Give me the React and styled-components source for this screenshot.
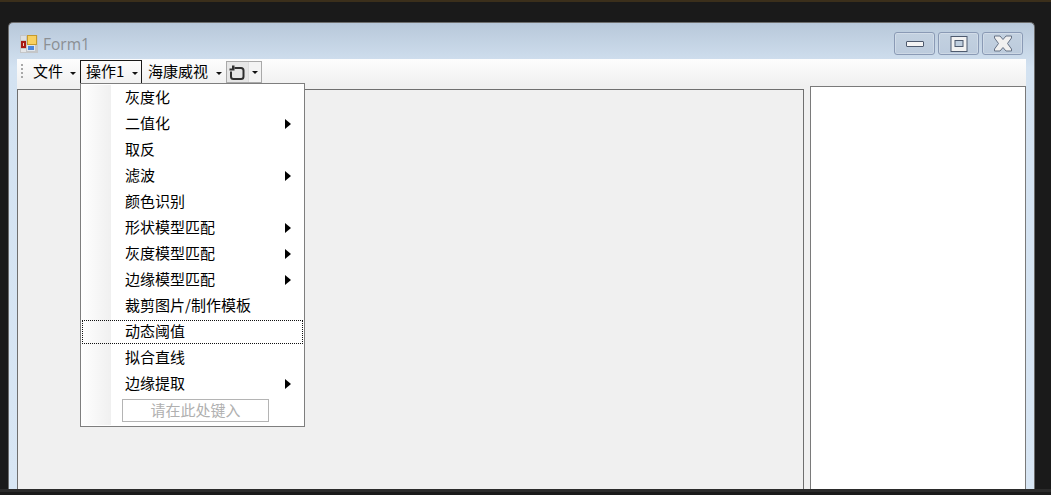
import React from 'react';
import styled, { createGlobalStyle } from 'styled-components';

const cjk = `'Noto Sans CJK SC', 'Liberation Sans', sans-serif`;

const GlobalStyle = createGlobalStyle`
  html, body {
    margin: 0;
    padding: 0;
    background: #1a1a1a;
    overflow: hidden;
  }
  * {
    box-sizing: border-box;
  }
`;

const Page = styled.div`
  width: 1051px;
  height: 495px;
  display: flex;
  flex-direction: column;
  background: #1a1a1a;
  overflow: hidden;
`;

const TopLine = styled.div`
  height: 2px;
  flex: none;
  background: #3b2f1b;
`;

const Desktop = styled.div`
  flex: 1;
  min-height: 0;
  padding: 20px 16px 0 8px;
  display: flex;
`;

const BottomBar = styled.div`
  height: 6px;
  flex: none;
  background: linear-gradient(to bottom, #2b2b2b 0, #2b2b2b 3px, #1a1a1a 3px);
`;

const Window = styled.div`
  flex: 1;
  display: flex;
  flex-direction: column;
  border: 1px solid #6d6d6d;
  border-bottom: none;
  border-radius: 5px 5px 0 0;
  padding: 0 8px 0 8px;
  background: linear-gradient(to bottom, #b8c8da 0, #d3e2f1 45px, #d8e6f4 100%);
`;

const TitleBar = styled.div`
  height: 36px;
  flex: none;
  display: flex;
  align-items: flex-start;
  padding: 9px 3px 0 3px;
`;

const AppIcon = styled.svg`
  width: 18px;
  height: 18px;
  margin-top: 3px;
  flex: none;
`;

const TitleText = styled.span`
  margin-left: 5px;
  margin-top: 2px;
  font: 15.5px/20px 'Open Sans', sans-serif;
  color: #8b8f94;
`;

const Caption = styled.div`
  margin-left: auto;
  display: flex;
  gap: 3px;
`;

const CaptionButton = styled.div`
  width: 41px;
  height: 23px;
  border: 1px solid #8a9ab5;
  border-radius: 3px;
  background: linear-gradient(to bottom, #c3d1e0, #bccbdd);
  box-shadow: inset 0 0 0 1px rgba(255, 255, 255, 0.25);
  display: flex;
  align-items: center;
  justify-content: center;
`;

const Toolbar = styled.div`
  height: 27px;
  flex: none;
  display: flex;
  align-items: flex-start;
  padding: 1px 0 0 4px;
  background: linear-gradient(to bottom, #fdfdfd, #f0f0f0);
  font: 15px/22px ${cjk};
  color: #000;
`;

const Grip = styled.div`
  width: 2px;
  height: 15px;
  margin: 4px 5px 0 0;
  flex: none;
  background: repeating-linear-gradient(to bottom, #a8a8a8 0, #a8a8a8 2px, transparent 2px, transparent 4px);
`;

const MenuButton = styled.div`
  position: relative;
  width: ${(p) => p.$width}px;
  height: 23px;
  flex: none;
  display: flex;
  align-items: center;
  padding: 0 0 2px ${(p) => p.$inset}px;
  border: 1px solid ${(p) => (p.$open ? '#1a1a1a' : 'transparent')};
  border-bottom: none;
  white-space: nowrap;
`;

const Caret = styled.span`
  position: absolute;
  right: ${(p) => p.$right}px;
  top: 11px;
  width: 0;
  height: 0;
  border-left: 3px solid transparent;
  border-right: 3px solid transparent;
  border-top: 3px solid #111;
`;

const SplitButton = styled.div`
  width: 36px;
  height: 22px;
  flex: none;
  margin-top: 1px;
  display: flex;
  border: 1px solid #a9a9a9;
`;

const SplitIcon = styled.div`
  width: 21px;
  display: flex;
  align-items: center;
  justify-content: center;
  background: #e6e6e6;
`;

const SplitArrow = styled.div`
  flex: 1;
  display: flex;
  align-items: center;
  justify-content: center;
  background: #f3f3f3;
  border-left: 1px solid #dcdcdc;

  &::after {
    content: '';
    border-left: 3px solid transparent;
    border-right: 3px solid transparent;
    border-top: 3px solid #111;
  }
`;

const Content = styled.div`
  flex: 1;
  min-height: 0;
  display: flex;
  align-items: stretch;
  gap: 6px;
  background: #f0f0f0;
`;

const LeftPanel = styled.div`
  width: 787px;
  margin-top: 3px;
  flex: none;
  background: #f0f0f0;
  border: 1px solid #6f6f6f;
  border-bottom: none;
`;

const RightPanel = styled.div`
  width: 216px;
  flex: none;
  background: #fff;
  border: 1px solid #7a7a7a;
  border-bottom: none;
`;

const Dropdown = styled.div`
  position: absolute;
  z-index: 5;
  left: -1px;
  top: 22px;
  width: 225px;
  height: 344px;
  padding: 1px;
  background: #fff;
  border: 1px solid #7e7e7e;
`;

const Gutter = styled.div`
  position: absolute;
  left: 1px;
  top: 1px;
  bottom: 1px;
  width: 29px;
  background: linear-gradient(to right, #fefefe, #f0f0f0);
`;

const MenuRow = styled.div`
  position: relative;
  height: 26px;
  display: flex;
  align-items: center;
  padding: 0 0 2px 43px;
  font: 15px/22px ${cjk};
  color: #000;
  white-space: nowrap;
  ${(p) => p.$focused && `
    &::before {
      content: '';
      position: absolute;
      left: 0;
      right: 0;
      top: 1px;
      bottom: 1px;
      border: 1px dotted #111;
    }
  `}
`;

const SubArrow = styled.span`
  position: absolute;
  left: 203px;
  top: 8px;
  width: 0;
  height: 0;
  border-top: 5px solid transparent;
  border-bottom: 5px solid transparent;
  border-left: 6px solid #000;
`;

const TypeHere = styled.div`
  position: relative;
  width: 147px;
  height: 23px;
  margin: 2px 0 0 40px;
  border: 1px solid #b4b4b4;
  text-align: center;
  font: 15px/19px ${cjk};
  color: #b0b0b0;
`;

const items = [
  { label: '灰度化' },
  { label: '二值化', sub: true },
  { label: '取反' },
  { label: '滤波', sub: true },
  { label: '颜色识别' },
  { label: '形状模型匹配', sub: true },
  { label: '灰度模型匹配', sub: true },
  { label: '边缘模型匹配', sub: true },
  { label: '裁剪图片/制作模板' },
  { label: '动态阈值', focused: true },
  { label: '拟合直线' },
  { label: '边缘提取', sub: true },
];

export default function App() {
  return (
    <Page>
      <GlobalStyle />
      <TopLine />
      <Desktop>
        <Window>
          <TitleBar>
            <AppIcon viewBox="0 0 18 18">
              <rect x="0" y="0" width="18" height="18" fill="#c4c6c8" />
              <rect x="1" y="1" width="5" height="4" fill="#dcdfe2" />
              <rect x="1" y="14" width="5" height="3" fill="#e4e6e8" />
              <rect x="1" y="6" width="5" height="7" fill="#a81a14" />
              <rect x="3" y="8" width="1" height="3" fill="#f0c8c0" />
              <rect x="7" y="0" width="10" height="10" fill="#c69a2c" />
              <rect x="8" y="1" width="8" height="8" fill="#f8d060" />
              <rect x="7" y="10" width="8" height="6" fill="#dfe6ee" />
              <rect x="8" y="11" width="6" height="4" fill="#4a86dc" />
            </AppIcon>
            <TitleText>Form1</TitleText>
            <Caption>
              <CaptionButton>
                <svg width="18" height="8" viewBox="0 0 18 8">
                  <rect x="0.5" y="1.5" width="17" height="5" rx="0.5" fill="#f4f4f4" stroke="#4e5a6e" />
                </svg>
              </CaptionButton>
              <CaptionButton>
                <svg width="18" height="16" viewBox="0 0 18 16">
                  <rect x="1" y="0.5" width="16" height="15" fill="#f2f2f2" stroke="#4e5a6e" />
                  <rect x="5" y="4.5" width="8" height="6" fill="#c0cfdf" stroke="#4e5a6e" />
                </svg>
              </CaptionButton>
              <CaptionButton>
                <svg width="20" height="17" viewBox="0 0 20 17">
                  <path
                    d="M1.5 1H7L10 4.5L13 1H18.5V3L14.5 8.5L18.5 14V16H13L10 12.5L7 16H1.5V14L5.5 8.5L1.5 3Z"
                    fill="#f0f0f0"
                    stroke="#667285"
                  />
                </svg>
              </CaptionButton>
            </Caption>
          </TitleBar>
          <Toolbar>
            <Grip />
            <MenuButton $width={52} $inset={4}>
              文件
              <Caret $right={3} />
            </MenuButton>
            <MenuButton $width={62} $inset={5} $open>
              操作1
              <Caret $right={3} />
              <Dropdown>
                <Gutter />
                {items.map((item) => (
                  <MenuRow key={item.label} $focused={item.focused}>
                    {item.label}
                    {item.sub && <SubArrow />}
                  </MenuRow>
                ))}
                <TypeHere>请在此处键入</TypeHere>
              </Dropdown>
            </MenuButton>
            <MenuButton $width={84} $inset={5}>
              海康威视
              <Caret $right={3} />
            </MenuButton>
            <SplitButton>
              <SplitIcon>
                <svg width="17" height="17" viewBox="0 0 17 17" fill="none">
                  <path
                    d="M5.5 4H12C13.5 4 14.5 5 14.5 6.5V12.5C14.5 14 13.5 15 12 15H4.5C3 15 2 14 2 12.5V7.5"
                    stroke="#2e2e2e"
                    strokeWidth="2"
                  />
                  <path d="M5.5 1.5V6.5H0.5V4.5H3V1.5Z" fill="#2e2e2e" />
                </svg>
              </SplitIcon>
              <SplitArrow />
            </SplitButton>
          </Toolbar>
          <Content>
            <LeftPanel />
            <RightPanel />
          </Content>
        </Window>
      </Desktop>
      <BottomBar />
    </Page>
  );
}
